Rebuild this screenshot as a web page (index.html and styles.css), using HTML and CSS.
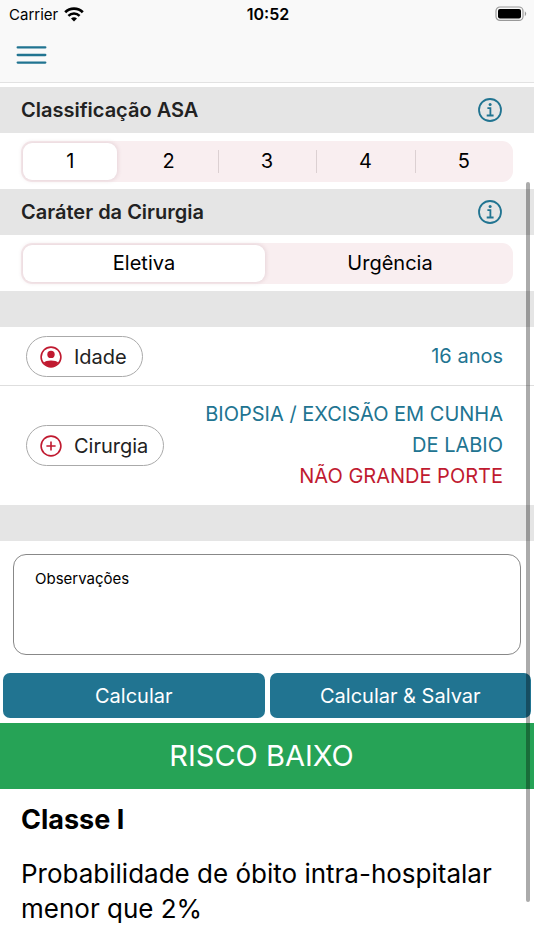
FILE: index.html
```html
<!DOCTYPE html>
<html lang="pt-BR">
<head>
    <meta charset="UTF-8">
    <meta name="viewport" content="width=device-width, initial-scale=1.0">
    <title>Risco Cirúrgico</title>
    <link rel="stylesheet" href="styles.css">
</head>
<body>
    <header class="top">
        <div class="status-bar">
            <div class="carrier">
                <span>Carrier</span>
                <svg class="wifi" viewBox="0 0 20 15" aria-hidden="true">
                    <path d="M1.2 5.2 A12.4 12.4 0 0 1 18.8 5.2" fill="none" stroke="#000" stroke-width="2.7"/>
                    <path d="M4.4 8.8 A8 8 0 0 1 15.6 8.8" fill="none" stroke="#000" stroke-width="2.5"/>
                    <path d="M10 14.6 L7 11.6 A4.5 4.5 0 0 1 13 11.6 Z"/>
                </svg>
            </div>
            <time class="clock">10:52</time>
            <svg class="battery" viewBox="0 0 32 16" aria-hidden="true">
                <rect x="1" y="1" width="27" height="13.4" rx="4" fill="none" stroke="#999" stroke-width="1.2"/>
                <rect x="3" y="3" width="23" height="9.4" rx="2"/>
                <path d="M29.8 5.2 Q32.6 7.7 29.8 10.2 Z" fill="#999"/>
            </svg>
        </div>
        <nav class="nav">
            <button type="button" class="menu-button" aria-label="Menu">
                <svg viewBox="0 0 30 18" aria-hidden="true">
                    <path d="M1.2 1.4H28.8M1.2 9H28.8M1.2 16.6H28.8"/>
                </svg>
            </button>
        </nav>
    </header>

    <main>
        <div class="section-title">
            <h2 id="asa">Classificação ASA</h2>
            <button type="button" class="info" aria-label="Sobre a classificação ASA">
                <svg viewBox="0 0 24 24" aria-hidden="true">
                    <circle cx="12" cy="12" r="11"/>
                    <path d="M9.4 10.2H12.4V17.4M8.7 17.5H15.6"/>
                    <circle class="dot" cx="12.1" cy="6.6" r="1.5"/>
                </svg>
            </button>
        </div>
        <div class="segments" role="radiogroup" aria-labelledby="asa">
            <label><input type="radio" name="asa" value="1" checked><span>1</span></label>
            <label><input type="radio" name="asa" value="2"><span>2</span></label>
            <label><input type="radio" name="asa" value="3"><span>3</span></label>
            <label><input type="radio" name="asa" value="4"><span>4</span></label>
            <label><input type="radio" name="asa" value="5"><span>5</span></label>
        </div>

        <div class="section-title">
            <h2 id="carater">Caráter da Cirurgia</h2>
            <button type="button" class="info" aria-label="Sobre o caráter da cirurgia">
                <svg viewBox="0 0 24 24" aria-hidden="true">
                    <circle cx="12" cy="12" r="11"/>
                    <path d="M9.4 10.2H12.4V17.4M8.7 17.5H15.6"/>
                    <circle class="dot" cx="12.1" cy="6.6" r="1.5"/>
                </svg>
            </button>
        </div>
        <div class="segments" role="radiogroup" aria-labelledby="carater">
            <label><input type="radio" name="carater" value="eletiva" checked><span>Eletiva</span></label>
            <label><input type="radio" name="carater" value="urgencia"><span>Urgência</span></label>
        </div>

        <div class="spacer"></div>

        <div class="row">
            <button type="button" class="chip">
                <svg viewBox="0 0 22 22" aria-hidden="true">
                    <circle cx="11" cy="11" r="9.9"/>
                    <circle class="fill" cx="11" cy="8.4" r="3.7"/>
                    <path class="fill" d="M3.6 16.8 C6 13.6 16 13.6 18.4 16.8 C15 22 7 22 3.6 16.8 Z"/>
                </svg>
                Idade
            </button>
            <p class="value">16 anos</p>
        </div>
        <div class="row">
            <button type="button" class="chip">
                <svg viewBox="0 0 22 22" aria-hidden="true">
                    <circle cx="11" cy="11" r="9.9"/>
                    <path d="M6.4 11H15.6M11 6.4V15.6"/>
                </svg>
                Cirurgia
            </button>
            <p class="value">BIOPSIA / EXCISÃO EM CUNHA DE LABIO<br><span class="porte">NÃO GRANDE PORTE</span></p>
        </div>

        <div class="spacer"></div>

        <textarea class="notes" aria-label="Observações" placeholder="Observações"></textarea>

        <div class="actions">
            <button type="button">Calcular</button>
            <button type="button">Calcular &amp; Salvar</button>
        </div>

        <div class="risk">RISCO BAIXO</div>
        <section class="result">
            <h3>Classe I</h3>
            <p>Probabilidade de óbito intra-hospitalar menor que 2%</p>
        </section>
    </main>

    <div class="scroll-thumb"></div>
</body>
</html>
```
FILE: styles.css
```css
* {
    box-sizing: border-box;
}

body {
    margin: 0;
    background: #fff;
    color: #000;
    font-family: Inter, "Liberation Sans", sans-serif;
    font-size: 20px;
}

h2, h3, p {
    margin: 0;
}

button, textarea {
    font-family: inherit;
}

button {
    cursor: pointer;
}

svg {
    display: block;
}

/* topo */
.top {
    background: #f9f9f9;
    border-bottom: 1px solid #e2e2e2;
    margin-bottom: 4px;
}

.status-bar {
    display: grid;
    grid-template-columns: 1fr auto 1fr;
    align-items: center;
    height: 28px;
    padding: 0 7px 0 9px;
    font-size: 15px;
}

.carrier {
    display: flex;
    align-items: center;
    gap: 6px;
}

.wifi {
    width: 20px;
    height: 15px;
}

.clock {
    font-size: 16px;
    font-weight: 600;
}

.battery {
    width: 32px;
    height: 16px;
    justify-self: end;
}

.nav {
    display: flex;
    align-items: center;
    height: 54px;
    padding: 0 16px;
}

.menu-button {
    padding: 0;
    border: 0;
    background: none;
}

.menu-button svg {
    width: 31px;
    height: 18px;
    fill: none;
    stroke: #217491;
    stroke-width: 2.3;
    stroke-linecap: round;
}

/* títulos */
.section-title {
    display: flex;
    align-items: center;
    justify-content: space-between;
    height: 46px;
    padding: 0 32px 0 21px;
    background: #e5e5e5;
}

.section-title h2 {
    color: #222;
    font-size: 20px;
    font-weight: 600;
}

.info {
    padding: 0;
    border: 0;
    background: none;
}

.info svg {
    width: 24px;
    height: 24px;
    fill: none;
    stroke: #217491;
    stroke-width: 1.8;
}

.info .dot {
    fill: #217491;
    stroke: none;
}

/* controle segmentado */
.segments {
    display: grid;
    grid-auto-flow: column;
    grid-auto-columns: 1fr;
    height: 41px;
    margin: 8px 21px 7px;
    border-radius: 11px;
    background: #f9eef0;
}

.segments label {
    position: relative;
    display: flex;
    align-items: center;
    padding: 2px;
}

.segments input {
    position: absolute;
    inset: 0;
    margin: 0;
    opacity: 0;
}

.segments span {
    flex: 1;
    line-height: 37px;
    text-align: center;
    border-radius: 9px;
}

.segments input:checked + span {
    background: #fff;
    box-shadow: 0 0 4px 1px rgba(120, 60, 75, 0.14);
}

.segments label + label + label::before {
    content: '';
    position: absolute;
    left: 0;
    top: 9px;
    bottom: 9px;
    width: 1px;
    background: #dcd0d2;
}

.spacer {
    height: 36px;
    background: #e5e5e5;
}

/* dados do paciente */
.row {
    display: flex;
    align-items: center;
    justify-content: space-between;
    gap: 24px;
    padding: 9px 31px 8px 26px;
}

.row + .row {
    padding-top: 13px;
    padding-bottom: 13px;
    border-top: 1px solid #dedede;
}

.chip {
    display: flex;
    flex-shrink: 0;
    align-items: center;
    gap: 12px;
    height: 41px;
    padding: 0 15px 0 13px;
    border: 1px solid #aaa;
    border-radius: 21px;
    background: #fff;
    color: #222;
    font-size: 20px;
}

.chip svg {
    width: 22px;
    height: 22px;
    fill: none;
    stroke: #c01a30;
    stroke-width: 1.6;
}

.chip .fill {
    fill: #c01a30;
    stroke: none;
}

.value {
    max-width: 300px;
    color: #217491;
    line-height: 31px;
    text-align: right;
}

.porte {
    color: #c01a30;
}

.notes {
    display: block;
    width: calc(100% - 26px);
    height: 101px;
    margin: 13px 13px 18px;
    padding: 14px 21px;
    border: 1px solid #888;
    border-radius: 13px;
    background: #fff;
    font-size: 15px;
    line-height: 20px;
    resize: none;
}

.notes::placeholder {
    color: #000;
    opacity: 1;
}

.actions {
    display: grid;
    grid-template-columns: 1fr 1fr;
    gap: 5px;
    padding: 0 3px 5px;
}

.actions button {
    height: 45px;
    padding: 0;
    border: 0;
    border-radius: 7px;
    background: #217491;
    color: #fff;
    font-size: 20px;
}

/* resultado */
.risk {
    padding-right: 11px;
    background: #26a356;
    color: #fff;
    font-size: 29px;
    line-height: 66px;
    text-align: center;
}

.result {
    padding: 13px 21px;
    font-size: 26px;
    line-height: 35px;
}

.result h3 {
    margin-bottom: 19px;
    font-size: 27px;
}

/* indicador de rolagem */
.scroll-thumb {
    position: fixed;
    top: 182px;
    right: 4px;
    bottom: 48px;
    width: 4px;
    border-radius: 2px;
    background: rgba(0, 0, 0, 0.33);
}
```
